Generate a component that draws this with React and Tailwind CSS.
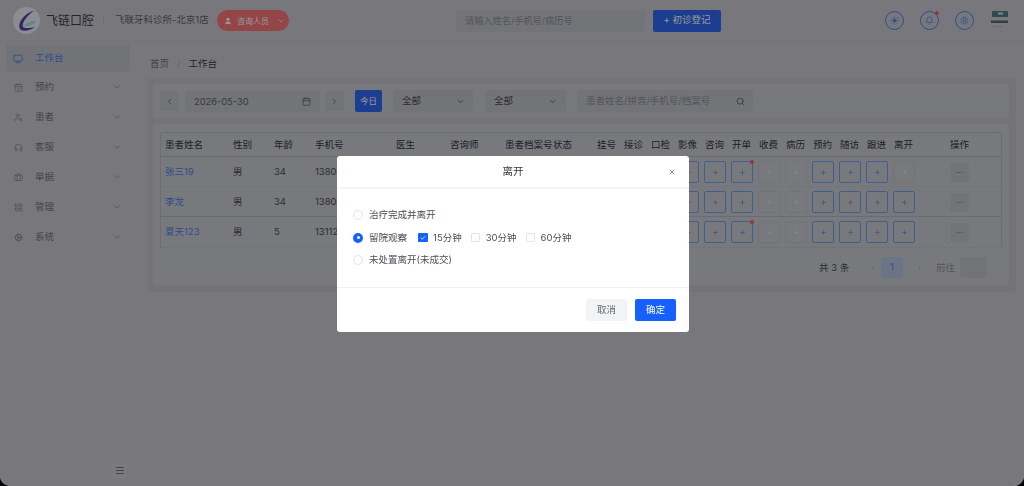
import React from 'react';
import { ChevronDown, ChevronLeft, ChevronRight, Calendar, Search, X, User, Monitor, CalendarCheck, UserSearch, Headphones, Briefcase, LayoutGrid, Cog, Sun, Bell, Settings, Check, Plus } from 'lucide-react';

const menu = [
  ['预约', CalendarCheck],
  ['患者', UserSearch],
  ['客服', Headphones],
  ['单据', Briefcase],
  ['管理', LayoutGrid],
  ['系统', Cog],
];

const cols = 'grid grid-cols-[68px_41px_41px_81px_54px_55px_48px_44px_repeat(12,27px)_1fr]';
const heads = ['患者姓名', '性别', '年龄', '手机号', '医生', '咨询师', '患者档案号', '状态', '挂号', '接诊', '口检', '影像', '咨询', '开单', '收费', '病历', '预约', '随访', '跟进', '离开'];

const rows = [
  { name: '张三19', sex: '男', age: '34', phone: '13800138000', leave: false, dot: true, line: 'border-[#c3c4ca]' },
  { name: '李龙', sex: '男', age: '34', phone: '13800138001', leave: true, dot: false, line: 'border-[#b2b4bc]' },
  { name: '夏天123', sex: '男', age: '5', phone: '13112345678', leave: true, dot: true, line: 'border-transparent' },
];

function PlusBox({ on, dot }) {
  return (
    <div className="pl-[3px] flex items-center h-full">
      <div className={`relative w-[22px] h-[22px] rounded-[2px] border flex items-center justify-center ${on ? 'border-[#6f9cf0] text-[#4f80e8]' : 'border-[#bfc0c7] text-[#e6e7eb]'}`}>
        <Plus size={7} strokeWidth={2} />
        {dot && <span className="absolute -top-[2px] -right-[2px] w-[4px] h-[4px] rounded-full bg-[#f55d62]" />}
      </div>
    </div>
  );
}

function Logo() {
  return (
    <svg width="27" height="27" viewBox="0 0 27 27" className="shrink-0">
      <circle cx="13.5" cy="13.5" r="13.5" fill="#e6ebf3" />
      <path d="M21 3.5C15 5.5 8.5 10 6.5 17c-1 3.6.5 6.4 3.5 6.6 4 .3 9-1.2 12-3.6-4 1-9 1.6-11.4.4C8.300 19 10 12 21 3.500Z" fill="#5c3fa8" />
      <path d="M11 19c2-3 6-5 12-5-1.500 3-6 5.200-12 5Z" fill="#a8dcec" />
    </svg>
  );
}

function Shelf() {
  return (
    <svg width="17" height="19" viewBox="0 0 17 19" className="shrink-0 ml-[1px]">
      <rect x="1" y="0" width="16" height="6" rx="1" fill="#4d7b85" />
      <rect x="7" y="1.500" width="5" height="2" fill="#c4eef2" />
      <rect x="0" y="9.500" width="17" height="2.500" fill="#5f636c" />
      <rect x="2" y="15" width="9" height="1" fill="#aeb0b8" />
    </svg>
  );
}

function RoundIcon({ Icon, dot, fill }) {
  return (
    <div className="relative w-[19px] h-[19px] rounded-full border border-[#4a80f0] flex items-center justify-center text-[#4a80f0]">
      <Icon size={9} strokeWidth={2} fill={fill ? 'currentColor' : 'none'} />
      {dot && <span className="absolute -top-[1px] -right-[1px] w-[4px] h-[4px] rounded-full bg-[#f55d62]" />}
    </div>
  );
}

function Radio({ on, label }) {
  return (
    <div className="flex items-center h-[22.500px]">
      <span className={`w-[10px] h-[10px] rounded-full flex items-center justify-center ${on ? 'bg-[#1660ff]' : 'border border-[#e2e4ea] bg-white'}`}>
        {on && <span className="w-[3px] h-[3px] rounded-full bg-white" />}
      </span>
      <span className="ml-[6px] pt-[1px] text-[9.500px] text-[#4b4f58]">{label}</span>
    </div>
  );
}

function Box({ on, label, className }) {
  return (
    <div className={`flex items-center ${className}`}>
      <span className={`w-[9.500px] h-[9.500px] rounded-[1px] flex items-center justify-center ${on ? 'bg-[#1660ff] text-white' : 'border border-[#e2e4ea] bg-white'}`}>
        {on && <Check size={6} strokeWidth={3} />}
      </span>
      <span className="ml-[5.500px] pt-[1px] text-[9.500px] text-[#4b4f58]">{label}</span>
    </div>
  );
}

export default function App() {
  return (
    <div className="h-[486px] w-[1024px] bg-black overflow-hidden font-['Inter','Noto_Sans_CJK_SC',sans-serif]">
      <div className="relative h-full w-full overflow-hidden rounded-b-[10px] bg-[#c8c9cf] text-[#33363d]">
        <header className="h-[42px] flex items-center border-b border-[#c0c1c7] pl-[13px] pr-[16px]">
          <Logo />
          <span className="ml-[6px] text-[12px] text-[#3c3f47] w-[50px]">飞链口腔</span>
          <span className="ml-[7px] h-[8px] w-px bg-[#b4b5bc]" />
          <span className="ml-[11px] text-[9.500px] text-[#5c606a] w-[95px] whitespace-nowrap">飞联牙科诊所-北京1店</span>
          <div className="ml-[7px] w-[72px] h-[21px] rounded-full bg-[#f57478] text-white flex items-center pl-[7px] gap-[5px]">
            <User size={8} fill="currentColor" />
            <span className="text-[8px] whitespace-nowrap">咨询人员</span>
            <ChevronDown size={8} className="ml-[3px]" />
          </div>
          <div className="ml-[167px] w-[189px] h-[22px] bg-[#c0c1c8] rounded-[2px] flex items-center pl-[9px] text-[9.200px] text-[#8c8e96]">请输入姓名/手机号/病历号</div>
          <button className="ml-[8px] w-[68px] h-[22px] rounded-[2px] bg-[#2f66f0] text-white text-[9.500px]">+ 初诊登记</button>
          <div className="ml-auto flex items-center gap-[16px]">
            <RoundIcon Icon={Sun} fill />
            <RoundIcon Icon={Bell} dot />
            <RoundIcon Icon={Settings} />
            <Shelf />
          </div>
        </header>

        <div className="flex h-[444px]">
          <aside className="relative w-[136px] shrink-0 px-[6px] pt-[3px]">
            <div className="h-[27px] rounded-[2px] bg-[#bec0c7] flex items-center pl-[7px] text-[#4f80e8]">
              <Monitor size={10} />
              <span className="ml-[12px] text-[9.500px]">工作台</span>
            </div>
            {menu.map(([label, Icon]) => (
              <div key={label} className="h-[30px] flex items-center pl-[8px] pr-[8px] text-[#6f737d]">
                <Icon size={9} strokeWidth={1.500} />
                <span className="ml-[12px] text-[9.500px]">{label}</span>
                <ChevronDown size={10} strokeWidth={1.500} className="ml-auto" />
              </div>
            ))}
            <div className="absolute bottom-[8px] left-[112px] w-[15px] h-[15px] bg-[#cccdd3] flex flex-col items-center justify-center gap-[2px]">
              <span className="w-[8px] h-px bg-[#6f737c]" />
              <span className="w-[8px] h-px bg-[#6f737c]" />
              <span className="w-[8px] h-px bg-[#6f737c]" />
            </div>
          </aside>

          <main className="flex-1 pl-[12px] pr-[8px]">
            <nav className="h-[36px] pt-[8px] flex items-center pl-[2px] text-[9.500px]">
              <span className="text-[#6a6e78]">首页</span>
              <span className="mx-[8px] text-[#a4a6ae]">/</span>
              <span className="text-[#3c3f47]">工作台</span>
            </nav>

            <section className="h-[214px] bg-[#c1c2c9] pl-[5px] pt-[6px] pr-[7px] rounded-[2px]">
              <div className="h-[34px] bg-[#c9cad0] rounded-[4px] flex items-center pl-[7px]">
                <button className="w-[19px] h-[20px] bg-[#c0c1c8] rounded-[2px] flex items-center justify-center text-[#55585f]"><ChevronLeft size={9} /></button>
                <div className="ml-[6px] w-[135px] h-[21px] bg-[#c0c1c8] rounded-[2px] flex items-center pl-[9px] pr-[9px] text-[9.300px] text-[#5d6068]">
                  <span className="pt-[1px]">2026-05-30</span>
                  <Calendar size={9} className="ml-auto" />
                </div>
                <button className="ml-[5px] w-[19px] h-[20px] bg-[#c0c1c8] rounded-[2px] flex items-center justify-center text-[#55585f]"><ChevronRight size={9} /></button>
                <button className="ml-[11px] w-[27px] h-[22px] bg-[#2f66f0] rounded-[2px] text-white text-[8.500px]">今日</button>
                {[0, 1].map((i) => (
                  <div key={i} className="ml-[11px] w-[81px] h-[22px] bg-[#c0c1c8] rounded-[2px] flex items-center pl-[9px] pr-[9px] text-[9.500px] text-[#4a4d55]">
                    <span className="pt-[1px]">全部</span>
                    <ChevronDown size={9} className="ml-auto" />
                  </div>
                ))}
                <div className="ml-[11px] w-[177px] h-[22px] bg-[#c0c1c8] rounded-[2px] flex items-center pl-[9px] pr-[9px] text-[9.500px] text-[#8c8e96]">
                  <span className="pt-[1px]">患者姓名/拼音/手机号/档案号</span>
                  <Search size={9} className="ml-auto text-[#55585f]" />
                </div>
              </div>

              <div className="mt-[6px] h-[161px] bg-[#c9cad0] rounded-[4px] px-[7px] pt-[8px]">
                <div className="h-[116px] border border-b-[#c1c2c9] border-[#b6b8c0] rounded-t-[3px] text-[9.500px]">
                  <div className={`${cols} h-[24px] pt-[2px] items-center border-b border-[#b0b2bb] text-[#33363d]`}>
                    {heads.map((h) => (
                      <div key={h} className="pl-[4px] whitespace-nowrap">{h}</div>
                    ))}
                    <div className="pl-[33px]">操作</div>
                  </div>
                  {rows.map((r) => (
                    <div key={r.name} className={`${cols} h-[30px] pt-[1px] items-center border-b ${r.line} text-[#4a4d55]`}>
                      <div className="pl-[4px] pt-[1px] text-[#4f80e8]">{r.name}</div>
                      <div className="pl-[4px] pt-[1px]">{r.sex}</div>
                      <div className="pl-[4px] pt-[1px]">{r.age}</div>
                      <div className="pl-[4px] pt-[1px]">{r.phone}</div>
                      <div /><div /><div /><div />
                      <div /><div /><div />
                      <PlusBox on />
                      <PlusBox on />
                      <PlusBox on dot={r.dot} />
                      <PlusBox />
                      <PlusBox />
                      <PlusBox on />
                      <PlusBox on />
                      <PlusBox on />
                      <PlusBox on={r.leave} />
                      <div className="pl-[33px]">
                        <div className="w-[19px] h-[19px] bg-[#c0c1c8] rounded-[2px] flex items-center justify-center text-[8px] text-[#666a73] leading-none">···</div>
                      </div>
                    </div>
                  ))}
                </div>
                <div className="mt-[9px] h-[21px] flex items-center text-[9.500px] pl-[659px]">
                  <span className="text-[#4a4d55] w-[46px] pt-[1px] whitespace-nowrap">共 3 条</span>
                  <ChevronLeft size={8} className="text-[#a4a6ae] w-[16px]" />
                  <span className="w-[22px] h-[21px] bg-[#b5c2e2] text-[#4f80e8] rounded-[2px] flex items-center justify-center">1</span>
                  <ChevronRight size={8} className="text-[#a4a6ae] w-[33px]" />
                  <span className="text-[#8c8e96] w-[24px] pt-[1px] whitespace-nowrap">前往</span>
                  <span className="w-[27px] h-[21px] bg-[#c0c1c8] rounded-[2px]" />
                </div>
              </div>
            </section>
          </main>
        </div>

        <div className="absolute inset-0 bg-black/40 backdrop-blur-[0.7px] flex items-start justify-center pt-[156px] pl-[2px]">
          <div className="w-[352px] h-[176px] bg-white rounded-[3px] flex flex-col">
            <div className="relative h-[33px] shrink-0 border-b-2 border-[#f3f4f6] flex items-center justify-center text-[10.500px] text-[#33363d]">
              <span className="pt-[1px]">离开</span>
              <X size={8} className="absolute right-[13px] top-[12px] text-[#55585f]" strokeWidth={2} />
            </div>
            <div className="flex-1 flex flex-col justify-center pl-[16px] pb-[1px] border-b border-[#f0f1f4]">
              <Radio label="治疗完成并离开" />
              <div className="flex items-center">
                <Radio on label="留院观察" />
                <Box on label="15分钟" className="ml-[11px]" />
                <Box label="30分钟" className="ml-[9px]" />
                <Box label="60分钟" className="ml-[9px]" />
              </div>
              <Radio label="未处置离开(未成交)" />
            </div>
            <div className="h-[44px] shrink-0 flex items-center justify-end gap-[8px] pr-[13px]">
              <button className="w-[41px] h-[22px] bg-[#f2f3f5] rounded-[2px] text-[9.500px] text-[#666a73]">取消</button>
              <button className="w-[41px] h-[22px] bg-[#1660ff] rounded-[2px] text-[9.500px] text-white">确定</button>
            </div>
          </div>
        </div>
      </div>
    </div>
  );
}
